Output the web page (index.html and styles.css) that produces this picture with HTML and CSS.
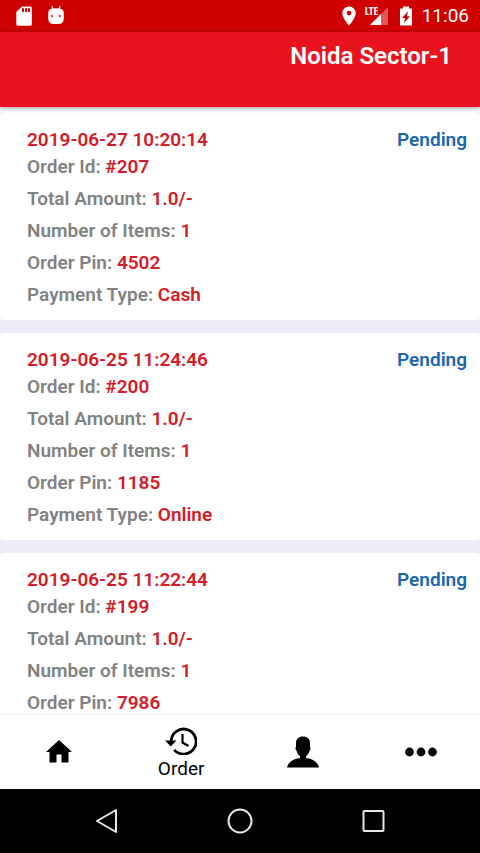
FILE: index.html
```html
<!DOCTYPE html>
<html lang="en">
<head>
<meta charset="utf-8">
<meta name="viewport" content="width=device-width, initial-scale=1">
<title>Orders</title>
<link rel="stylesheet" href="styles.css">
</head>
<body>
<div class="status-bar">
  <div class="status-group status-left">
    <svg class="icon-sd" viewBox="0 0 16 20" width="16" height="20" aria-hidden="true"><path fill="#fff" fill-rule="evenodd" d="M6 0.5h8.2a1.6 1.6 0 0 1 1.6 1.6v16a1.6 1.6 0 0 1-1.6 1.6H1.9a1.6 1.6 0 0 1-1.6-1.6V6zM6 2.3v3.8h2V2.3zm3 0v3.8h2V2.3zm3 0v3.8h2V2.3z"/></svg>
    <svg viewBox="0 0 16 20" width="16" height="20" aria-hidden="true"><path d="M4 0l1 4M12 0l-1 4" stroke="#fff" stroke-width="1.2"/><path fill="#fff" d="M2.5 3Q8 1.600 13.500 3Q15.800 4 15.800 8v4Q15.800 18 10.500 18h-5Q.2 18 .2 12V8Q.2 4 2.500 3z"/><circle cx="4.200" cy="10" r="1" fill="#c00000"/><circle cx="11.800" cy="10" r="1" fill="#c00000"/></svg>
  </div>
  <div class="status-group">
    <svg class="icon-pin" viewBox="0 0 14 20" width="14" height="20" aria-hidden="true"><path fill="#fff" fill-rule="evenodd" d="M7 0.500a6.700 6.700 0 0 0-6.700 6.700C.3 12 7 19.500 7 19.500s6.700-7.500 6.700-12.300A6.700 6.700 0 0 0 7 .5zm0 4.200a2.400 2.400 0 1 1 0 4.800 2.400 2.400 0 0 1 0-4.800z"/></svg>
    <div class="signal"><span class="signal-type">LTE</span><svg viewBox="0 0 20 20" width="20" height="20" aria-hidden="true"><path d="M19 1v18H12V8z" fill="#fff" fill-opacity=".35"/><path d="M12 8v11H1z" fill="#fff"/></svg></div>
    <svg class="icon-battery" viewBox="0 0 12 20" width="12" height="20" aria-hidden="true"><path fill="#fff" d="M3 .5h6v2h2.500a.5.5 0 0 1 .5.5v16a.5.5 0 0 1-.5.5H.5a.5.5 0 0 1-.5-.5V3a.5.5 0 0 1 .5-.5H3z"/><path fill="#c00000" d="M8 5.500L2 12h3.200l-1.200 5L10 10.200H7z"/></svg>
    <time class="clock">11:06</time>
  </div>
</div>
<header class="app-bar"><h1>Noida Sector-1</h1></header>
<main class="orders">
  <article class="card">
    <div class="card-head"><time>2019-06-27 10:20:14</time><span class="status">Pending</span></div>
    <p>Order Id: <b>#207</b></p>
    <p>Total Amount: <b>1.0/-</b></p>
    <p>Number of Items: <b>1</b></p>
    <p>Order Pin: <b>4502</b></p>
    <p>Payment Type: <b>Cash</b></p>
  </article>
  <article class="card">
    <div class="card-head"><time>2019-06-25 11:24:46</time><span class="status">Pending</span></div>
    <p>Order Id: <b>#200</b></p>
    <p>Total Amount: <b>1.0/-</b></p>
    <p>Number of Items: <b>1</b></p>
    <p>Order Pin: <b>1185</b></p>
    <p>Payment Type: <b>Online</b></p>
  </article>
  <article class="card">
    <div class="card-head"><time>2019-06-25 11:22:44</time><span class="status">Pending</span></div>
    <p>Order Id: <b>#199</b></p>
    <p>Total Amount: <b>1.0/-</b></p>
    <p>Number of Items: <b>1</b></p>
    <p>Order Pin: <b>7986</b></p>
  </article>
</main>
<nav class="tabs">
  <a href="#home" aria-label="Home"><svg viewBox="0 0 26 24" width="26" height="24"><path d="M13 0L0 12h3.500v10.500H10.500v-8h5v8H22.500V12H26z"/></svg></a>
  <a href="#order" class="active" aria-current="page"><svg viewBox="0 0 32 28" width="32" height="28"><path d="M6.100 14.500A12.500 12.500 0 1 1 9.200 22.800" fill="none" stroke="#000" stroke-width="2.800"/><path d="M0 13.500h11.500L5.700 19.500z"/><path d="M17.500 7v8.500l6 3.500" fill="none" stroke="#000" stroke-width="2.200"/></svg><span>Order</span></a>
  <a href="#profile" aria-label="Profile"><svg viewBox="0 0 32 32" width="32" height="32"><path d="M16 .5c4.500 0 7 2.500 7 6.500v4c.9.200.7 3-.5 3.500-.5 2.500-1.700 4.200-3.500 5.500v2c7 .8 11.500 3.500 13 9.500H0c1.500-6 6-8.700 13-9.500v-2c-1.800-1.300-3-3-3.500-5.500C8.300 14 8.100 11.200 9 11V7C9 3 11.500.5 16 .5z"/></svg></a>
  <a href="#more" aria-label="More"><svg viewBox="0 0 32 10" width="32" height="10"><circle cx="4.500" cy="5" r="4.400"/><circle cx="16" cy="5" r="4.400"/><circle cx="27.500" cy="5" r="4.400"/></svg></a>
</nav>
<div class="system-nav">
  <button type="button" aria-label="Back"><svg viewBox="0 0 26 26" width="26" height="26"><path d="M23 2v22L4 13z"/></svg></button>
  <button type="button" aria-label="Home screen"><svg viewBox="0 0 26 26" width="26" height="26"><circle cx="13" cy="13" r="11.500"/></svg></button>
  <button type="button" aria-label="Recent apps"><svg viewBox="0 0 26 26" width="26" height="26"><rect x="2.500" y="3" width="20" height="20" rx="1"/></svg></button>
</div>
</body>
</html>
```
FILE: styles.css
```css
* { box-sizing: border-box; }

body {
  margin: 0;
  height: 100vh;
  display: flex;
  flex-direction: column;
  overflow: hidden;
  font-family: Roboto, "Liberation Sans", sans-serif;
  background: #eeecf8;
}

svg { display: block; }

.status-bar {
  flex: none;
  display: flex;
  justify-content: space-between;
  align-items: center;
  height: 32px;
  padding: 0 11px 0 16px;
  background: #cf0000;
  color: #fff;
}

.status-group { display: flex; align-items: center; }
.status-left { gap: 16px; }
.icon-pin { margin-right: 9px; }

.signal { position: relative; padding-left: 4px; margin-right: 11px; }
.signal-type {
  position: absolute;
  left: 0;
  top: 0;
  font: 700 11px/10px "Open Sans Condensed", "Roboto Condensed", Roboto, sans-serif;
}

.icon-battery { margin-right: 10px; }
.clock { font-size: 19px; line-height: 32px; }

.app-bar {
  flex: none;
  position: relative;
  z-index: 1;
  height: 75px;
  padding: 8px 28px;
  background: #e9131e;
  color: #fff;
  text-align: right;
  box-shadow: 0 1px 4px rgba(0, 0, 0, 0.4);
}

.app-bar h1 { margin: 0; font-size: 24px; line-height: 32px; font-weight: 600; }

.orders {
  flex: 1;
  min-height: 0;
  overflow: hidden;
  display: flex;
  flex-direction: column;
  gap: 13px;
  padding-top: 6px;
  background: linear-gradient(#fafafc 6px, #eeecf8 6px);
}

.card {
  flex: none;
  padding: 16px 13px 9px 27px;
  border-radius: 4px;
  background: #fff;
  font-size: 19px;
  font-weight: 600;
  color: #828282;
}

.card-head {
  display: flex;
  justify-content: space-between;
  line-height: 22px;
  color: #d41c28;
}

.card p { margin: 0; line-height: 32px; }
.card b { font-weight: inherit; color: #d41c28; }
.card .status { color: #1b67b2; }

.tabs {
  flex: none;
  display: flex;
  height: 76px;
  background: #fff;
  border-top: 2px solid #f5f5f5;
}

.tabs a {
  flex: 118;
  display: flex;
  flex-direction: column;
  align-items: center;
  justify-content: center;
  color: #000;
  text-decoration: none;
}

.tabs .active { flex-grow: 127; padding-top: 6px; font-size: 19px; line-height: 28px; }

.system-nav {
  flex: none;
  display: flex;
  justify-content: center;
  align-items: center;
  height: 64px;
  background: #000;
}

.system-nav button {
  flex: 0 0 28%;
  display: flex;
  justify-content: center;
  padding: 0;
  border: 0;
  background: none;
}

.system-nav svg { fill: none; stroke: #e8e8e8; stroke-width: 2; stroke-linejoin: round; }
```
